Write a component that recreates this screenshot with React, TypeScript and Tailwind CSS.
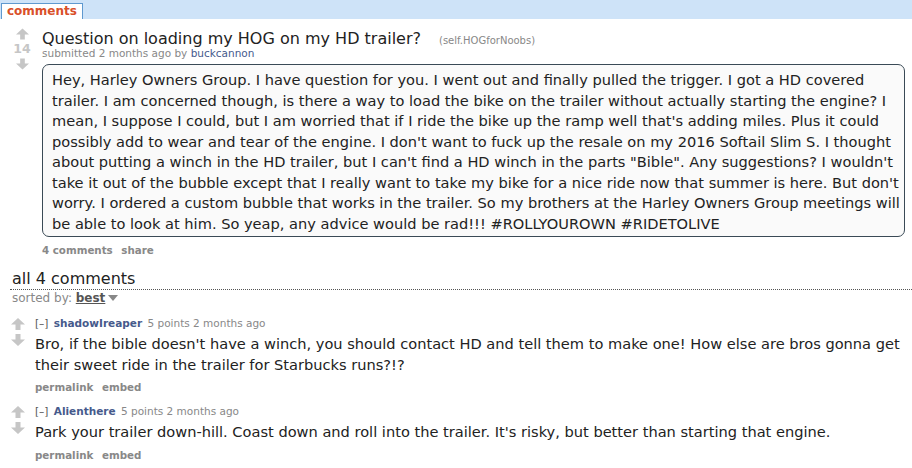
import { ReactNode } from "react";

const selftext = [
  "Hey, Harley Owners Group. I have question for you. I went out and finally pulled the trigger. I got a HD covered",
  "trailer. I am concerned though, is there a way to load the bike on the trailer without actually starting the engine? I",
  "mean, I suppose I could, but I am worried that if I ride the bike up the ramp well that's adding miles. Plus it could",
  "possibly add to wear and tear of the engine. I don't want to fuck up the resale on my 2016 Softail Slim S. I thought",
  "about putting a winch in the HD trailer, but I can't find a HD winch in the parts \"Bible\". Any suggestions? I wouldn't",
  "take it out of the bubble except that I really want to take my bike for a nice ride now that summer is here. But don't",
  "worry. I ordered a custom bubble that works in the trailer. So my brothers at the Harley Owners Group meetings will",
  "be able to look at him. So yeap, any advice would be rad!!! #ROLLYOUROWN #RIDETOLIVE",
];

function Arrow({ down = false, className = "" }: { down?: boolean; className?: string }) {
  return (
    <svg viewBox="0 0 14 12" className={`${className} ${down ? "rotate-180" : ""}`}>
      <path d="M7 0 L14 6.5 L9.5 6.5 L9.5 12 L4.5 12 L4.5 6.5 L0 6.5 Z" fill="#c6c6c6" />
    </svg>
  );
}

function Comment({ author, lines }: { author: string; lines: string[] }) {
  return (
    <div className="flex">
      <div className="w-[35px] shrink-0 flex flex-col items-center pl-[1px] pt-[2px]">
        <Arrow className="w-[14px] h-[12px]" />
        <Arrow down className="w-[14px] h-[12px] mt-[4px]" />
      </div>
      <div className="flex-1">
        <div className="h-[14px] leading-[14px] text-[10.5px] text-[#888]">
          <span className="text-[#555]">[–]</span>{" "}
          <span className="font-bold text-[#465a8c] ml-[2px]">{author}</span>{" "}
          <span className="ml-[2px]">5 points 2 months ago</span>
        </div>
        <div className="mt-[4px] text-[14.6px] leading-[20.5px] text-[#222]">
          {lines.map((l) => (
            <div key={l} className="whitespace-nowrap">{l}</div>
          ))}
        </div>
        <div className="mt-[2px] h-[20px] leading-[20px] text-[10.3px] font-bold text-[#888]">
          permalink <span className="ml-[5px]">embed</span>
        </div>
      </div>
    </div>
  );
}

function Link({ children }: { children: ReactNode }) {
  return <span className="text-[#465a8c]">{children}</span>;
}

export default function App() {
  return (
    <div className="w-[912px] h-[468px] overflow-hidden bg-white font-['Verdana','DejaVu_Sans',sans-serif]">
      <div className="h-[19px] bg-[#cee3f8] flex items-end pl-[1px]">
        <div className="h-[16px] px-[5px] bg-white border border-b-0 border-[#5f99cf] text-[12px] leading-[15px] font-bold text-[#d9502a]">
          comments
        </div>
      </div>

      <div className="flex pt-[13px]">
        <div className="w-[42px] shrink-0 flex flex-col items-center pl-[2px] -mt-[4px]">
          <Arrow className="w-[13px] h-[12px]" />
          <div className="text-[12.5px] leading-[14px] font-bold text-[#c6c6c6] mt-[2px]">14</div>
          <Arrow down className="w-[13px] h-[12px] mt-[2px]" />
        </div>
        <div className="flex-1 pr-[8px]">
          <div className="flex items-baseline h-[15px] -mt-[1px]">
            <span className="text-[16px] leading-[15px] text-[#222]">Question on loading my HOG on my HD trailer?</span>
            <span className="ml-[18px] text-[10px] leading-[15px] text-[#888]">(self.HOGforNoobs)</span>
          </div>
          <div className="mt-[1px] h-[12px] text-[10.5px] leading-[12px] text-[#888]">
            submitted 2 months ago by <Link>buckcannon</Link>
          </div>
          <div className="mt-[5px] w-[863px] h-[173px] border border-[#3a4a56] rounded-[7px] bg-[#fafafa] pl-[9px] pt-[5px] text-[14.6px] leading-[20.5px] text-[#222]">
            {selftext.map((l) => (
              <div key={l} className="whitespace-nowrap">{l}</div>
            ))}
          </div>
          <div className="mt-[6px] text-[10.3px] leading-[14px] font-bold text-[#888]">
            4 comments <span className="ml-[5px]">share</span>
          </div>
        </div>
      </div>

      <div className="mt-[12px] ml-[10px] border-b border-dotted border-[#555]">
        <div className="pl-[2px] text-[16px] leading-[20px] text-[#222]">all 4 comments</div>
      </div>
      <div className="pl-[12px] mt-[1px] text-[12px] leading-[14px] text-[#888] flex items-center">
        sorted by:&nbsp;<span className="font-bold text-[#555] underline">best</span>
        <svg viewBox="0 0 10 6" className="w-[10px] h-[6px] ml-[3px]">
          <path d="M0 0 L10 0 L5 6 Z" fill="#888" />
        </svg>
      </div>

      <div className="mt-[11px] flex flex-col gap-[7px]">
        <Comment
          author="shadowIreaper"
          lines={[
            "Bro, if the bible doesn't have a winch, you should contact HD and tell them to make one! How else are bros gonna get",
            "their sweet ride in the trailer for Starbucks runs?!?",
          ]}
        />
        <Comment
          author="Alienthere"
          lines={[
            "Park your trailer down-hill. Coast down and roll into the trailer. It's risky, but better than starting that engine.",
          ]}
        />
      </div>
    </div>
  );
}
